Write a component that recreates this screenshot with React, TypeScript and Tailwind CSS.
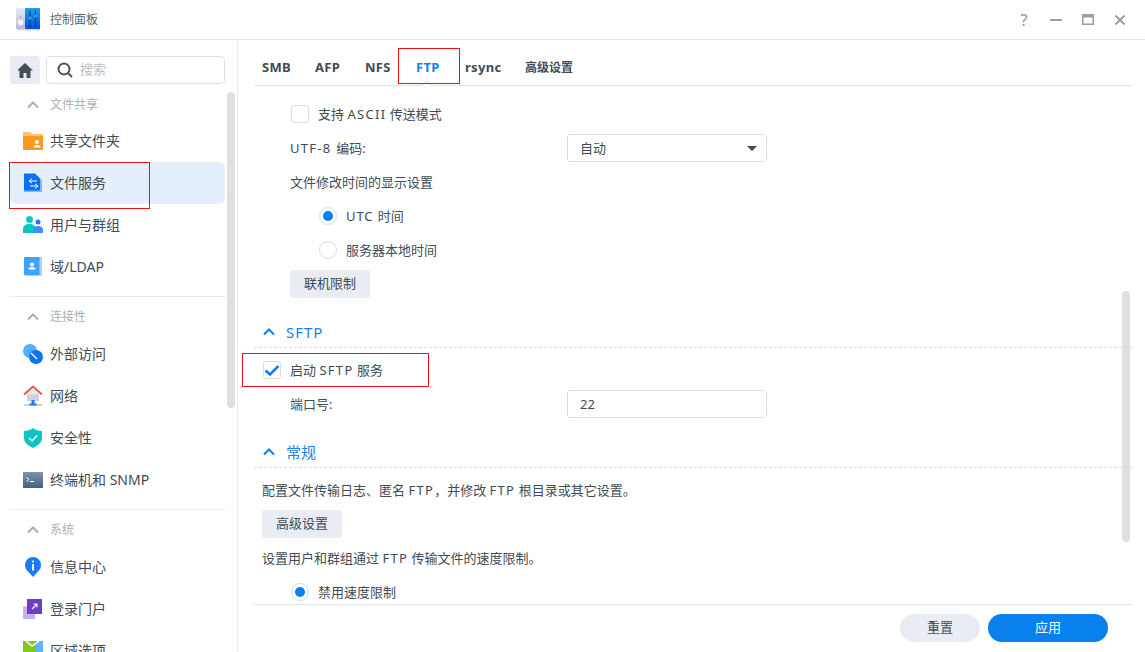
import React from "react";

const font = { fontFamily: '"Noto Sans", "Noto Sans CJK SC", sans-serif' };

function Chevron({ className }: { className: string }) {
  return (
    <svg width="14" height="14" viewBox="0 0 14 14" className={className} fill="none" stroke="currentColor" strokeWidth="2">
      <path d="M2 9.500 L7 4.500 L12 9.500" />
    </svg>
  );
}

function L({ children }: { children: React.ReactNode }) {
  return <span className="tracking-[1.3px]">{children}</span>;
}

const icons: Record<string, React.ReactNode> = {
  folder: (
    <svg width="20" height="20" viewBox="0 0 20 20">
      <path d="M0 1h7l2 2h11v4H0z" fill="#fdc271" />
      <path d="M0 5h20v13.500a.5.500 0 0 1-.5.500H0z" fill="#fb9a1f" />
      <circle cx="14" cy="11" r="2" fill="#fff" />
      <path d="M10.500 16.500c0-1.800 1.500-2.500 3.500-2.500s3.500.7 3.500 2.500z" fill="#fff" />
    </svg>
  ),
  file: (
    <svg width="20" height="20" viewBox="0 0 20 20">
      <path d="M1 1h11l7 6v12H1z" fill="#7cb6fb" />
      <path d="M1 1h11l5 5v12H1z" fill="#0a6ff2" transform="translate(0 -0.500)" />
      <path d="M9 5.500 L6 8 L9 10 M6 8h8M12 11 L15 13 L12 15.500 M15 13H7" stroke="#fff" strokeWidth="1" fill="none" />
    </svg>
  ),
  users: (
    <svg width="20" height="18" viewBox="0 0 20 18">
      <circle cx="6.500" cy="3.500" r="3.500" fill="#12c7c7" />
      <path d="M0 17v-4c0-3 2.500-5 6.500-5s6 2 6 5v4z" fill="#0ac8c0" />
      <circle cx="15" cy="6" r="2.500" fill="#1a7bf5" />
      <path d="M10 17v-3c0-2.500 2-4 5-4s5 1.500 5 4v3z" fill="#3f8dfa" />
    </svg>
  ),
  ldap: (
    <svg width="18" height="20" viewBox="0 0 18 20">
      <rect x="1" y="0" width="17" height="19" fill="#a8d4fd" />
      <rect x="0" y="0" width="15.500" height="18" fill="#3ea3fb" />
      <circle cx="8" cy="7.500" r="2" fill="#fff" />
      <path d="M4.500 12.500c0-1.800 1.500-2.500 3.500-2.500s3.500.7 3.500 2.500z" fill="#fff" />
    </svg>
  ),
  ext: (
    <svg width="20" height="20" viewBox="0 0 20 20">
      <circle cx="7" cy="7" r="7" fill="#4fb0fc" />
      <circle cx="13" cy="13" r="7" fill="#1171ee" />
      <path d="M8 9 L14 15" stroke="#fff" strokeWidth="1.300" />
    </svg>
  ),
  net: (
    <svg width="20" height="22" viewBox="0 0 20 22">
      <path d="M4 9h12v7H4z" fill="#cfd3d8" />
      <path d="M1 9.500 L10 1.500 L19 9.500" fill="#e6e9ec" stroke="#dc5a50" strokeWidth="1.800" />
      <rect x="8.500" y="15" width="3" height="4" fill="#1a7bf5" />
      <rect x="1" y="19" width="18" height="1.800" fill="#c9cdd2" />
      <rect x="6.500" y="18.500" width="7" height="2" fill="#1a7bf5" />
    </svg>
  ),
  shield: (
    <svg width="18" height="20" viewBox="0 0 18 20">
      <path d="M9 0 C11 2 15 3 18 3 V10 C18 15 13 18 9 20 C5 18 0 15 0 10 V3 C3 3 7 2 9 0z" fill="#0bc4c4" />
      <path d="M5 10 L8 13 L13 7.500" stroke="#fff" strokeWidth="1.400" fill="none" />
    </svg>
  ),
  term: (
    <svg width="20" height="16" viewBox="0 0 20 16">
      <defs>
        <linearGradient id="t" x1="0" y1="0" x2="0" y2="1">
          <stop offset="0" stopColor="#7c93ad" />
          <stop offset="1" stopColor="#44617f" />
        </linearGradient>
      </defs>
      <rect width="20" height="16" fill="url(#t)" />
      <path d="M3.500 5.500 L6 7.500 L3.500 9.500" stroke="#fff" strokeWidth="1" fill="none" />
      <path d="M7 9.500h4" stroke="#fff" strokeWidth="1" />
    </svg>
  ),
  info: (
    <svg width="16" height="20" viewBox="0 0 16 20">
      <path d="M8 20 L2.500 14 C.5 12 0 10 0 8 A8 8 0 0 1 16 8 C16 10 15.500 12 13.500 14z" fill="#1a7bf5" />
      <circle cx="8" cy="4.500" r="1.100" fill="#fff" />
      <rect x="7" y="7" width="2" height="6.500" fill="#fff" />
    </svg>
  ),
  portal: (
    <svg width="20" height="20" viewBox="0 0 20 20">
      <rect x="0" y="7.500" width="12" height="12.500" fill="#c9aef0" />
      <rect x="4" y="0" width="15" height="15" fill="#6a3fc0" />
      <path d="M9 10 L14 5 M10.500 5H14V8.500" stroke="#fff" strokeWidth="1.100" fill="none" />
    </svg>
  ),
  region: (
    <svg width="20" height="20" viewBox="0 0 20 20">
      <rect width="20" height="20" fill="#7fc91a" />
      <path d="M13 0h7v20h-7z" fill="#5cb6f5" />
      <path d="M3 0 L9 5 L16 0" stroke="#fff" strokeWidth="1.500" fill="none" />
    </svg>
  ),
};

function NavItem({ icon, label, active }: { icon: string; label: string; active?: boolean }) {
  return (
    <div className={`h-[42px] flex items-center rounded-md pl-[13px] ${active ? "bg-[#e3f0fc]" : ""}`}>
      <div className="w-[20px] flex justify-center shrink-0">{icons[icon]}</div>
      <span className="ml-[7px] pb-[2px] text-[14px] text-[#414b55]">{label}</span>
    </div>
  );
}

function NavHeader({ label, className }: { label: string; className: string }) {
  return (
    <div className={`h-[36px] flex items-center ${className}`}>
      <Chevron className="ml-[16px] text-[#a9afb6]" />
      <span className="ml-[10px] text-[12px] text-[#a9afb6]">{label}</span>
    </div>
  );
}

function Sidebar() {
  return (
    <aside className="relative w-[238px] shrink-0 border-r border-[#e6eaef] overflow-hidden pl-[10px] pr-[12px] pt-[16px]">
      <div className="flex gap-[6px] h-[28px]">
        <div className="w-[30px] rounded-[3px] bg-[#e9edf3] flex items-center justify-center">
          <svg width="16" height="15" viewBox="0 0 16 15" fill="#46505a">
            <path d="M8 0 L16 7.500 H13.500 V15 H9.500 V10 H6.500 V15 H2.500 V7.500 H0z" />
          </svg>
        </div>
        <div className="flex-1 rounded-[4px] border border-[#d5e2ee] flex items-center pl-[10px]">
          <svg width="16" height="16" viewBox="0 0 16 16" fill="none" stroke="#4b555f" strokeWidth="2">
            <circle cx="7" cy="7" r="5.500" />
            <path d="M11 11 L15 15" />
          </svg>
          <span className="ml-[7px] text-[13px] text-[#b9bfc6]">搜索</span>
        </div>
      </div>
      <div>
        <NavHeader label="文件共享" className="pt-[6px]" />
        <NavItem icon="folder" label="共享文件夹" />
        <NavItem icon="file" label="文件服务" active />
        <NavItem icon="users" label="用户与群组" />
        <NavItem icon="ldap" label="域/LDAP" />
      </div>
      <div className="mt-[8px] border-t border-[#e6ecf2]">
        <NavHeader label="连接性" className="pt-[4px]" />
        <NavItem icon="ext" label="外部访问" />
        <NavItem icon="net" label="网络" />
        <NavItem icon="shield" label="安全性" />
        <NavItem icon="term" label="终端机和 SNMP" />
      </div>
      <div className="mt-[8px] border-t border-[#e6ecf2]">
        <NavHeader label="系统" className="pt-[4px]" />
        <NavItem icon="info" label="信息中心" />
        <NavItem icon="portal" label="登录门户" />
        <NavItem icon="region" label="区域选项" />
      </div>
      <div className="absolute left-[227px] top-[52px] w-[8px] h-[316px] rounded-full bg-[#e0e0e0]" />
    </aside>
  );
}

function Row({ children, className = "" }: { children: React.ReactNode; className?: string }) {
  return <div className={`h-[34px] flex items-center shrink-0 text-[13px] text-[#414b55] ${className}`}>{children}</div>;
}

function T({ children, className = "" }: { children: React.ReactNode; className?: string }) {
  return <span className={`pt-[1px] ${className}`}>{children}</span>;
}

function Checkbox({ checked }: { checked?: boolean }) {
  return (
    <div className="w-[18px] h-[18px] rounded-[3px] border border-[#d5dfe9] flex items-center justify-center shrink-0">
      {checked && (
        <svg width="16" height="13" viewBox="0 0 16 13" fill="none" stroke="#0a7ff0" strokeWidth="2.600">
          <path d="M1.500 6.500 L6 10.500 L14.500 2" />
        </svg>
      )}
    </div>
  );
}

function Radio({ checked }: { checked?: boolean }) {
  return (
    <div className="w-[18px] h-[18px] rounded-full border border-[#d5dfe9] flex items-center justify-center shrink-0">
      {checked && <div className="w-[10px] h-[10px] rounded-full bg-[#0a7ff0]" />}
    </div>
  );
}

function Btn({ children }: { children: React.ReactNode }) {
  return <div className="w-[80px] h-[28px] rounded-[3px] bg-[#e9edf3] flex items-center justify-center text-[13px] text-[#414b55]">{children}</div>;
}

function SectionHead({ label }: { label: React.ReactNode }) {
  return (
    <div className="mt-[16px] h-[31px] shrink-0 border-b border-dashed border-[#d5dfe9] flex items-center pl-[8px] mb-[5px] text-[#1682e8]">
      <Chevron className="text-[#0a7ff0]" />
      <span className="ml-[10px] text-[15px]">{label}</span>
    </div>
  );
}

function Field({ children }: { children: React.ReactNode }) {
  return <div className="ml-auto mr-[365px] w-[200px] h-[28px] rounded-[3px] border border-[#d5dfe9] flex items-center pl-[12px] pr-[9px] text-[13px] text-[#414b55]">{children}</div>;
}

function Tab({ label, active, className }: { label: string; active?: boolean; className: string }) {
  return <span className={`text-[13px] font-bold tracking-[0.3px] ${active ? "text-[#0a85f0]" : "text-[#414b55]"} ${className}`}>{label}</span>;
}

function Main() {
  return (
    <main className="relative flex-1 min-w-0 flex flex-col pl-[16px] pr-[13px] overflow-hidden">
      <div className="relative h-[46px] shrink-0 border-b border-[#dde5ec] flex items-center pl-[8px] pt-[10px]">
        <Tab label="SMB" className="w-[53px]" />
        <Tab label="AFP" className="w-[50px]" />
        <Tab label="NFS" className="w-[51px]" />
        <Tab label="FTP" active className="w-[49px]" />
        <Tab label="rsync" className="w-[60px]" />
        <span className="text-[12px] font-semibold text-[#414b55]">高级设置</span>
        <div className="absolute left-[169px] bottom-[-4px] w-[7px] h-[7px] rotate-45 bg-white border-l border-t border-[#dde5ec]" />
      </div>

      <div className="flex-1 min-h-0 overflow-hidden flex flex-col pt-[11px]">
        <Row className="pl-[37px]">
          <Checkbox />
          <T className="ml-[9px]">支持 <L>ASCII</L> 传送模式</T>
        </Row>
        <Row className="pl-[36px]">
          <T><L>UTF-8 </L>编码<L>:</L></T>
          <Field>
            <T>自动</T>
            <span className="ml-auto w-0 h-0 border-l-[5px] border-r-[5px] border-t-[5px] border-l-transparent border-r-transparent border-t-[#414b55]" />
          </Field>
        </Row>
        <Row className="pl-[36px]"><T>文件修改时间的显示设置</T></Row>
        <Row className="pl-[65px]">
          <Radio checked />
          <T className="ml-[9px]"><span className="tracking-[0.9px]">UTC </span>时间</T>
        </Row>
        <Row className="pl-[65px]">
          <Radio />
          <T className="ml-[9px]">服务器本地时间</T>
        </Row>
        <Row className="pl-[36px]">
          <Btn>联机限制</Btn>
        </Row>

        <SectionHead label={<span className="tracking-[1px]">SFTP</span>} />
        <Row className="pl-[9px]">
          <Checkbox checked />
          <T className="ml-[9px]">启动 <L>SFTP</L> 服务</T>
        </Row>
        <Row className="pl-[36px]">
          <T>端口号<L>:</L></T>
          <Field><T>22</T></Field>
        </Row>

        <SectionHead label="常规" />
        <Row className="pl-[8px]"><T>配置文件传输日志、匿名 <L>FTP</L>，并修改 <L>FTP</L> 根目录或其它设置。</T></Row>
        <Row className="pl-[8px]">
          <Btn>高级设置</Btn>
        </Row>
        <Row className="pl-[8px]"><T>设置用户和群组通过 <L>FTP</L> 传输文件的速度限制。</T></Row>
        <Row className="pl-[37px]">
          <Radio checked />
          <T className="ml-[9px]">禁用速度限制</T>
        </Row>
      </div>

      <div className="h-[48px] shrink-0 border-t border-[#dde5ec] flex items-start justify-end gap-[8px] pt-[9px] pr-[24px]">
        <div className="w-[80px] h-[28px] rounded-full bg-[#e9edf3] flex items-center justify-center text-[13px] text-[#414b55]">重置</div>
        <div className="w-[120px] h-[28px] rounded-full bg-[#0880ee] flex items-center justify-center text-[13px] text-white">应用</div>
      </div>

      <div className="absolute left-[884px] top-[251px] w-[8px] h-[251px] rounded-full bg-[#e0e0e0]" />
    </main>
  );
}

function TitleBar() {
  return (
    <header className="h-[40px] shrink-0 border-b border-[#e6e8eb] flex items-center pl-[16px]">
      <svg width="24" height="24" viewBox="0 0 24 24">
        <defs>
          <linearGradient id="a" x1="0" y1="0" x2="0" y2="1">
            <stop offset="0" stopColor="#e9ebf5" />
            <stop offset="1" stopColor="#b5b8d2" />
          </linearGradient>
          <linearGradient id="b" x1="0" y1="0" x2="0" y2="1">
            <stop offset="0" stopColor="#1da0ee" />
            <stop offset="1" stopColor="#0a4fd0" />
          </linearGradient>
        </defs>
        <rect x="0" y="0" width="9" height="21" rx="1" fill="url(#a)" />
        <rect x="9" y="0" width="15" height="21" fill="url(#b)" />
        <circle cx="4.500" cy="14.500" r="2.700" fill="#f4f4fa" />
        <circle cx="4.500" cy="9" r=".6" fill="#666" />
        <path d="M14 2v17M19.500 2v17" stroke="#0b2f7a" strokeWidth="1" />
        <circle cx="14" cy="10" r="1.500" fill="#3f9df5" />
        <circle cx="19.500" cy="8" r="1.500" fill="#3f9df5" />
        <rect x="1" y="21" width="23" height="1.500" fill="#d8d8e0" />
      </svg>
      <span className="ml-[10px] text-[12px] text-[#59636d]">控制面板</span>
      <div className="ml-auto flex items-center text-[#9a9fa6]">
        <span className="w-[14px] text-center text-[16px] font-medium leading-none mr-[19px]">?</span>
        <svg width="12" height="14" viewBox="0 0 12 14" className="mr-[20px]"><rect x="0" y="6" width="12" height="2" fill="currentColor" /></svg>
        <svg width="12" height="11" viewBox="0 0 12 11" className="mr-[21px]"><path d="M0 0h12v11H0zM1.500 3.500v6h9v-6z" fill="currentColor" fillRule="evenodd" /></svg>
        <svg width="10" height="10" viewBox="0 0 10 10" className="mr-[20px]" stroke="currentColor" strokeWidth="2"><path d="M.5 .5 L9.500 9.500M9.500 .5 L.5 9.500" /></svg>
      </div>
    </header>
  );
}

export default function App() {
  return (
    <div className="relative w-[1145px] h-[652px] bg-white flex flex-col overflow-hidden" style={font}>
      <TitleBar />
      <div className="flex-1 min-h-0 flex">
        <Sidebar />
        <Main />
      </div>
      <div className="absolute left-[398px] top-[48px] w-[62px] h-[36px] border border-[#e8141c]" />
      <div className="absolute left-[9px] top-[162px] w-[141px] h-[47px] border border-[#e8141c]" />
      <div className="absolute left-[242px] top-[353px] w-[187px] h-[34px] border border-[#e8141c]" />
    </div>
  );
}
